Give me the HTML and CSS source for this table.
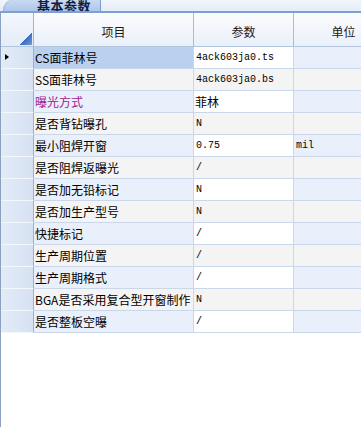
FILE: index.html
```html
<!DOCTYPE html>
<html lang="zh">
<head>
<meta charset="utf-8">
<link rel="stylesheet" href="styles.css">
</head>
<body>
<div class="page">
  <div class="tabstrip">
    <div class="tab"><span class="tab-label">基本参数</span></div>
  </div>
  <div class="gridwrap">
    <div class="grid">
      <div class="hcell corner"><span class="corner-tri"></span></div>
      <div class="hcell">项目</div>
      <div class="hcell">参数</div>
      <div class="hcell">单位</div>

      <div class="rh"><span class="arrow"></span></div>
      <div class="c name odd sel">CS面菲林号</div>
      <div class="c val white mono">4ack603ja0.ts</div>
      <div class="c unit odd"></div>

      <div class="rh"></div>
      <div class="c name even">SS面菲林号</div>
      <div class="c val even mono">4ack603ja0.bs</div>
      <div class="c unit even"></div>

      <div class="rh"></div>
      <div class="c name odd purple">曝光方式</div>
      <div class="c val white">菲林</div>
      <div class="c unit odd"></div>

      <div class="rh"></div>
      <div class="c name even">是否背钻曝孔</div>
      <div class="c val even mono">N</div>
      <div class="c unit even"></div>

      <div class="rh"></div>
      <div class="c name odd">最小阻焊开窗</div>
      <div class="c val white mono">0.75</div>
      <div class="c unit odd mono">mil</div>

      <div class="rh"></div>
      <div class="c name even">是否阻焊返曝光</div>
      <div class="c val even mono">/</div>
      <div class="c unit even"></div>

      <div class="rh"></div>
      <div class="c name odd">是否加无铅标记</div>
      <div class="c val white mono">N</div>
      <div class="c unit odd"></div>

      <div class="rh"></div>
      <div class="c name even">是否加生产型号</div>
      <div class="c val even mono">N</div>
      <div class="c unit even"></div>

      <div class="rh"></div>
      <div class="c name odd">快捷标记</div>
      <div class="c val white mono">/</div>
      <div class="c unit odd"></div>

      <div class="rh"></div>
      <div class="c name even">生产周期位置</div>
      <div class="c val even mono">/</div>
      <div class="c unit even"></div>

      <div class="rh"></div>
      <div class="c name odd">生产周期格式</div>
      <div class="c val white mono">/</div>
      <div class="c unit odd"></div>

      <div class="rh"></div>
      <div class="c name even">BGA是否采用复合型开窗制作</div>
      <div class="c val even mono">N</div>
      <div class="c unit even"></div>

      <div class="rh"></div>
      <div class="c name odd">是否整板空曝</div>
      <div class="c val white mono">/</div>
      <div class="c unit odd"></div>
    </div>
  </div>
</div>
</body>
</html>
```

FILE: styles.css
```css
html, body {
  margin: 0;
  padding: 0;
  background: #ffffff;
}
body {
  width: 361px;
  height: 427px;
  overflow: hidden;
  font-family: "Noto Sans CJK SC", "Liberation Sans", sans-serif;
  font-size: 12px;
  color: #000;
}
.page {
  width: 361px;
  height: 427px;
  display: flex;
  flex-direction: column;
}
.tabstrip {
  height: 11px;
  flex: none;
  background: linear-gradient(#f2f6fc, #e4ecf8);
  border-bottom: 2px solid #7f9fcf;
  display: flex;
  align-items: flex-end;
  overflow: hidden;
  position: relative;
}
.tab {
  margin-left: 3px;
  width: 96px;
  height: 11px;
  background: linear-gradient(#c9daf2, #aec6ea);
  border-right: 1px solid #7f9fcf;
  border-left: 1px solid #8ea9d2;
  border-top-left-radius: 12px 14px;
  display: flex;
  align-items: flex-end;
  justify-content: center;
  overflow: hidden;
}
.tab-label {
  font-weight: bold;
  font-size: 13px;
  line-height: 13px;
  margin-bottom: -1px;
  margin-left: 24px;
  letter-spacing: 0.5px;
  color: #102040;
}
.gridwrap {
  flex: 1;
  border-left: 1px solid #8aa1c2;
  overflow: hidden;
}
.grid {
  display: grid;
  grid-template-columns: 33px 160px 100px 100px;
  grid-template-rows: 34px repeat(13, 22px);
  width: 393px;
}
.hcell {
  background: linear-gradient(#fbfcfe, #eaf0f9);
  border-right: 1px solid #a9bcd9;
  border-bottom: 1px solid #b3c5df;
  display: flex;
  align-items: center;
  justify-content: center;
  font-size: 12px;
  color: #1a1a1a;
  padding-top: 3px;
  box-sizing: border-box;
}
.hcell.corner {
  position: relative;
  background: linear-gradient(#f4f7fc, #e4ecf7);
  border-right: 1px solid #9fb5d4;
}
.corner-tri {
  position: absolute;
  right: 1px;
  bottom: 1px;
  width: 12px;
  height: 12px;
  background: linear-gradient(135deg, transparent 50%, #3d6fbe 50%, #6f9ad6 100%);
}
.rh {
  background: linear-gradient(90deg, #e3ebf7, #d5e1f2);
  border-right: 1px solid #9ab1d2;
  border-bottom: 1px solid #f3f6fb;
  box-sizing: border-box;
  position: relative;
}
.arrow {
  position: absolute;
  left: 4px;
  top: 7px;
  width: 0;
  height: 0;
  border-top: 3.5px solid transparent;
  border-bottom: 3.5px solid transparent;
  border-left: 4px solid #000;
}
.c {
  border-right: 1px solid #c9d7eb;
  border-bottom: 1px solid #c9d7eb;
  box-sizing: border-box;
  display: flex;
  align-items: center;
  padding-left: 1px;
  white-space: nowrap;
  overflow: hidden;
  line-height: 1;
}
.c.odd { background: #e9f0fb; }
.c.even { background: #f4f4f4; }
.c.white { background: #ffffff; }
.c.sel { background: #b9d0ef; }
.c.purple { color: #a1208d; }
.c.mono {
  font-family: "Liberation Mono", "DejaVu Sans Mono", monospace;
  font-size: 10px;
  padding-left: 2px;
  padding-top: 1px;
}
.c.name { font-size: 12px; }
```
